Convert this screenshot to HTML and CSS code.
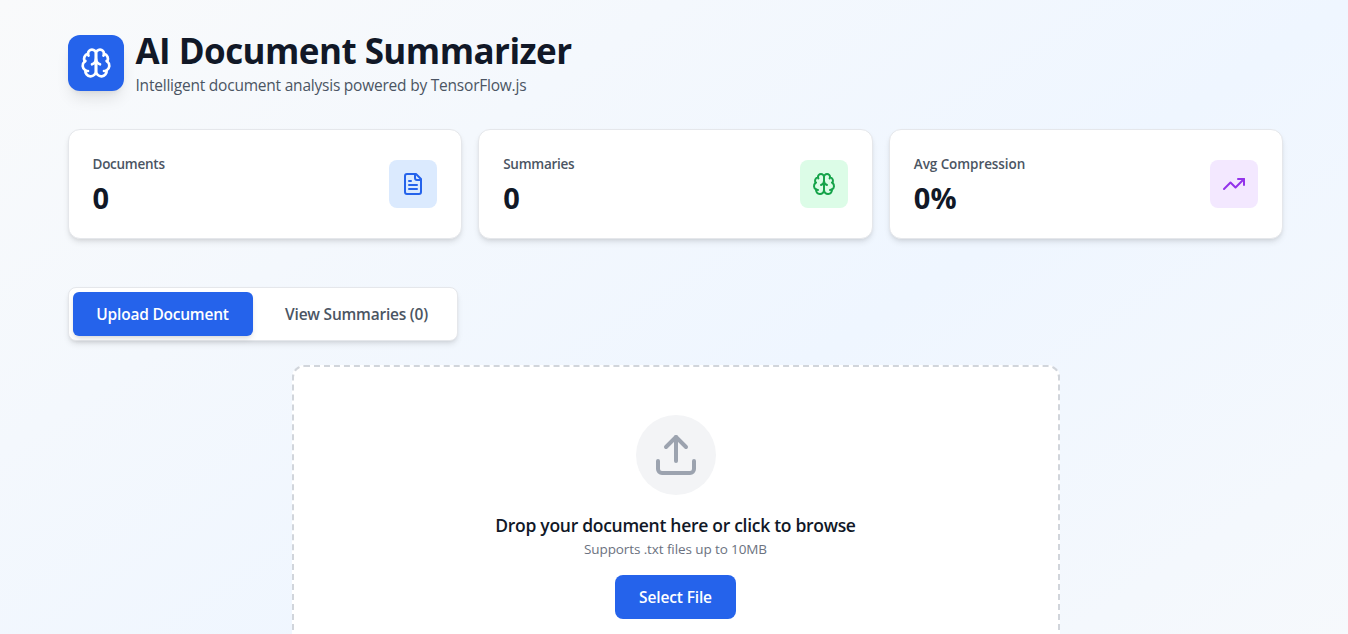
FILE: index.html
```
<!DOCTYPE html>
<html lang="en">
<head>
<meta charset="utf-8">
<title>AI Document Summarizer</title>
<link rel="stylesheet" href="styles.css">
</head>
<body>
<svg class="sprite" aria-hidden="true">
  <symbol id="brain" viewBox="0 0 24 24">
    <path d="M12 5a3 3 0 1 0-5.997.125 4 4 0 0 0-2.526 5.77 4 4 0 0 0 .556 6.588A4 4 0 1 0 12 18Z"/>
    <path d="M12 5a3 3 0 1 1 5.997.125 4 4 0 0 1 2.526 5.77 4 4 0 0 1-.556 6.588A4 4 0 1 1 12 18Z"/>
    <path d="M15 13a4.5 4.5 0 0 1-3-4 4.5 4.5 0 0 1-3 4"/>
    <path d="M17.599 6.5a3 3 0 0 0 .399-1.375"/>
    <path d="M6.003 5.125A3 3 0 0 0 6.401 6.5"/>
    <path d="M3.477 10.896a4 4 0 0 1 .585-.396"/>
    <path d="M19.938 10.5a4 4 0 0 1 .585.396"/>
    <path d="M6 18a4 4 0 0 1-1.967-.516"/>
    <path d="M19.967 17.484A4 4 0 0 1 18 18"/>
  </symbol>
</svg>
<div class="page">
  <main class="container">
    <header class="header">
      <div class="logo"><svg class="icon icon-lg"><use href="#brain"/></svg></div>
      <div>
        <h1 class="title">AI Document Summarizer</h1>
        <p class="subtitle">Intelligent document analysis powered by TensorFlow.js</p>
      </div>
    </header>

    <section class="stats">
      <article class="card">
        <div>
          <p class="label">Documents</p>
          <p class="value">0</p>
        </div>
        <div class="badge blue">
          <svg class="icon" viewBox="0 0 24 24"><path d="M15 2H6a2 2 0 0 0-2 2v16a2 2 0 0 0 2 2h12a2 2 0 0 0 2-2V7Z"/><path d="M14 2v4a2 2 0 0 0 2 2h4"/><path d="M10 9H8"/><path d="M16 13H8"/><path d="M16 17H8"/></svg>
        </div>
      </article>
      <article class="card">
        <div>
          <p class="label">Summaries</p>
          <p class="value">0</p>
        </div>
        <div class="badge green"><svg class="icon"><use href="#brain"/></svg></div>
      </article>
      <article class="card">
        <div>
          <p class="label label-wide">Avg Compression</p>
          <p class="value">0%</p>
        </div>
        <div class="badge purple">
          <svg class="icon" viewBox="0 0 24 24"><path d="M22 7l-8.500 8.500-5-5L2 17"/><path d="M16 7h6v6"/></svg>
        </div>
      </article>
    </section>

    <nav class="tabs">
      <button class="tab tab-upload active">Upload Document</button>
      <button class="tab tab-view">View Summaries (0)</button>
    </nav>

    <section class="dropzone">
      <div class="drop-icon">
        <svg class="icon icon-xl" viewBox="0 0 24 24"><path d="M21 15v4a2 2 0 0 1-2 2H5a2 2 0 0 1-2-2v-4"/><path d="M17 8l-5-5-5 5"/><path d="M12 3v12"/></svg>
      </div>
      <h2 class="drop-title">Drop your document here or click to browse</h2>
      <p class="drop-note">Supports .txt files up to 10MB</p>
      <button class="select">Select File</button>
    </section>
  </main>
</div>
</body>
</html>
```
FILE: styles.css
```
* { box-sizing: border-box; margin: 0; padding: 0; }
html, body { height: 634px; overflow: hidden; }
body { font-family: "Segoe UI", "Open Sans", "Noto Sans", sans-serif; color: #111827; }
button { font: inherit; border: 0; }
.sprite { display: none; }
.page {
  width: 1351px;
  height: 634px;
  overflow: hidden;
  background: linear-gradient(to bottom right, #f9fafb, #eff6ff, #f9fafb) 0 0 / 1351px 900px no-repeat;
}
.container { width: 1280px; margin: 0 auto; padding: 31px 32px 32px; }
.icon { width: 24px; height: 24px; fill: none; stroke: currentColor; stroke-width: 2; stroke-linecap: round; stroke-linejoin: round; }
.icon-lg { width: 32px; height: 32px; }
.icon-xl { width: 48px; height: 48px; }

.header { display: flex; align-items: center; gap: 12px; height: 64px; white-space: nowrap; }
.logo {
  display: grid; place-items: center; width: 56px; height: 56px; border-radius: 12px;
  background: #2563eb; color: #fff;
  box-shadow: 0 10px 15px -3px rgba(0,0,0,.1), 0 4px 6px -4px rgba(0,0,0,.1);
}
.title { padding-bottom: 3px; font-size: 35px; line-height: 40px; font-weight: 700; letter-spacing: -.55px; }
.subtitle { font-size: 15.5px; line-height: 22px; color: #4b5563; letter-spacing: -.22px; }

.stats { display: grid; grid-template-columns: repeat(3, 1fr); gap: 16px; margin-top: 34px; }
.card {
  display: flex; align-items: center; justify-content: space-between; height: 110px; padding: 24px;
  border: 1px solid #e5e7eb; border-radius: 12px; background: #fff;
  box-shadow: 0 4px 6px -1px rgba(0,0,0,.1), 0 2px 4px -2px rgba(0,0,0,.1);
}
.label { font-size: 13.5px; line-height: 20px; font-weight: 600; color: #4b5563; letter-spacing: -.26px; }
.label-wide { letter-spacing: -.08px; }
.value { padding-top: 6px; font-size: 29px; line-height: 36px; font-weight: 700; letter-spacing: 0; margin-bottom: -2px; }
.badge { display: grid; place-items: center; width: 48px; height: 48px; border-radius: 8px; }
.blue { background: #dbeafe; color: #2563eb; }
.green { background: #dcfce7; color: #16a34a; }
.purple { background: #f3e8ff; color: #9333ea; }

.tabs {
  display: flex; gap: 8px; width: 390px; height: 54px; margin-top: 48px; padding: 4px;
  border: 1px solid #e5e7eb; border-radius: 8px; background: #fff;
  box-shadow: 0 4px 6px -1px rgba(0,0,0,.1), 0 2px 4px -2px rgba(0,0,0,.1);
}
.tab { height: 44px; border-radius: 6px; background: none; font-size: 15.5px; font-weight: 600; color: #4b5563; white-space: nowrap; letter-spacing: -.22px; }
.tab-upload { width: 180px; }
.tab-view { width: 192px; }
.tab.active { background: #2563eb; color: #fff; box-shadow: 0 4px 6px -1px rgba(0,0,0,.1), 0 2px 4px -2px rgba(0,0,0,.1); }

.dropzone {
  display: flex; flex-direction: column; align-items: center; width: 768px; height: 304px;
  margin: 24px auto 0; padding: 48px; border: 2px dashed #d1d5db; border-radius: 12px; background: #fff;
  white-space: nowrap;
}
.drop-icon { display: grid; place-items: center; width: 80px; height: 80px; border-radius: 50%; background: #f3f4f6; color: #9ca3af; }
.drop-title { margin-top: 16px; font-size: 17.5px; line-height: 28px; font-weight: 600; letter-spacing: -.29px; }
.drop-note { font-size: 13.5px; line-height: 20px; color: #6b7280; letter-spacing: -.1px; }
.select { width: 121px; height: 44px; margin-top: 16px; border-radius: 8px; background: #2563eb; color: #fff; font-size: 15.5px; font-weight: 600; letter-spacing: -.14px; }
```
